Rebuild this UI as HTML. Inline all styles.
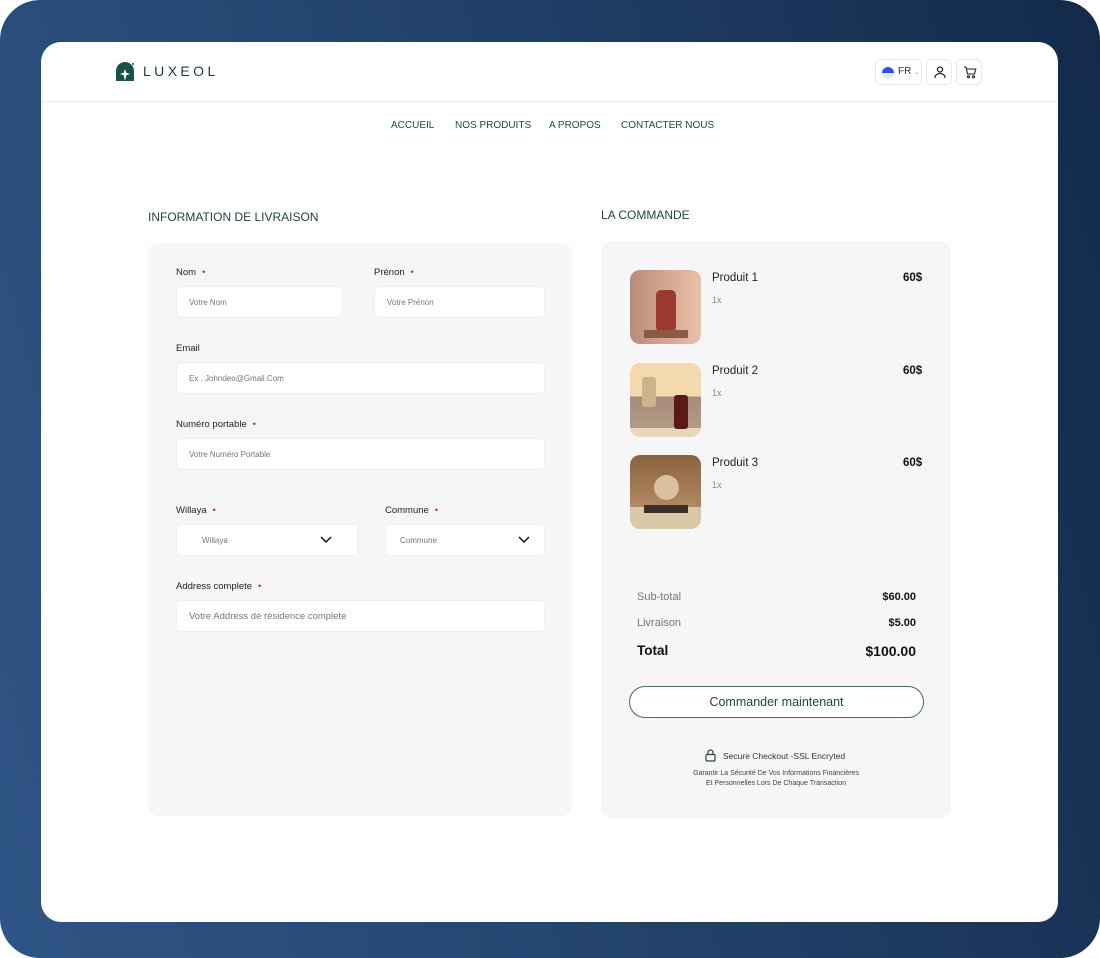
<!DOCTYPE html>
<html><head><meta charset="utf-8"><style>
*{margin:0;padding:0;box-sizing:border-box}
body{width:1100px;height:958px;overflow:hidden;font-family:"Liberation Sans",sans-serif;background:#fff}
.bg{position:absolute;left:0;top:0;width:1100px;height:958px;border-radius:40px;background:linear-gradient(75deg,#2f5586 0%,#22426b 50%,#132a4a 100%)}
.card{position:absolute;left:41px;top:42px;width:1017px;height:880px;background:#fff;border-radius:20px}
.a{position:absolute}
.nav{font-size:10px;color:#1f4a3a;top:120px}
.panel{background:#f6f5f8;border-radius:10px}
.lbl{font-size:9.5px;color:#222}
.lbl i{color:#c0223a;font-style:normal;margin-left:6px;font-size:9px}
.in{background:#fff;border-radius:5px;height:32px;font-size:8px;color:#777;padding-left:12px;line-height:32px;border:1px solid #efeef2}
.img{width:71px;height:74px;border-radius:10px;overflow:hidden}
.pn{font-size:11.5px;color:#222}
.q{font-size:9px;color:#888}
.pr{font-size:11.5px;font-weight:bold;color:#111}
.ib{border:1px solid #e8e8ec;border-radius:5px;height:26px;background:#fff}
</style></head><body>
<div class="bg"></div>
<div class="card"></div>
<svg class="a" style="left:115px;top:62px" width="20" height="20" viewBox="0 0 20 20"><path d="M1 19V9a9 9 0 0 1 18 0v10z" fill="#17524a"/><path d="M10 7l1.3 3.7L15 12l-3.7 1.3L10 19l-1.3-5.7L5 12l3.7-1.3z" fill="#fff"/><circle cx="18" cy="2" r="1" fill="#17524a"/></svg>
<div class="a" style="left:143px;top:63px;font-size:14px;letter-spacing:3.4px;color:#1d3d38">LUXEOL</div>
<div class="ib a" style="left:875px;top:59px;width:47px"><div class="a" style="left:6px;top:7px;width:12px;height:12px;border-radius:50%;background:linear-gradient(#2f4fe6 50%,#e6e8f0 50%)"></div><div class="a" style="left:22px;top:6px;font-size:10px;color:#333">FR <span style="font-size:6px;color:#888">⌄</span></div></div>
<div class="ib a" style="left:926px;top:59px;width:26px"><svg class="a" style="left:6px;top:5px" width="14" height="14" viewBox="0 0 14 14" fill="none" stroke="#222" stroke-width="1.2"><circle cx="7" cy="4.5" r="2.5"/><path d="M2 13c0-3 2.2-4.5 5-4.5s5 1.5 5 4.5"/></svg></div>
<div class="ib a" style="left:956px;top:59px;width:26px"><svg class="a" style="left:6px;top:5px" width="14" height="14" viewBox="0 0 14 14" fill="none" stroke="#222" stroke-width="1.1"><path d="M1 2h2l1.5 7h7l1.3-5H3.6"/><circle cx="5.5" cy="11.8" r="1"/><circle cx="10.5" cy="11.8" r="1"/></svg></div>
<div class="a" style="left:41px;top:101px;width:1017px;height:1px;background:#ececf0"></div>
<div class="a nav" style="left:391px">ACCUEIL</div>
<div class="a nav" style="left:455px">NOS PRODUITS</div>
<div class="a nav" style="left:549px">A PROPOS</div>
<div class="a nav" style="left:621px">CONTACTER NOUS</div>

<div class="a" style="left:148px;top:210px;font-size:12px;color:#1f4a2e">INFORMATION DE LIVRAISON</div>
<div class="a" style="left:601px;top:208px;font-size:12px;color:#1f4a2e">LA COMMANDE</div>

<div class="a panel" style="left:148px;top:243px;width:424px;height:573px"></div>
<div class="a lbl" style="left:176px;top:267px">Nom<i>•</i></div>
<div class="a in" style="left:176px;top:286px;width:167px">Votre Nom</div>
<div class="a lbl" style="left:374px;top:267px">Prénon<i>•</i></div>
<div class="a in" style="left:374px;top:286px;width:171px">Votre Prénon</div>
<div class="a lbl" style="left:176px;top:343px">Email</div>
<div class="a in" style="left:176px;top:362px;width:369px">Ex . Johndeo@Gmail.Com</div>
<div class="a lbl" style="left:176px;top:419px">Numéro portable<i>•</i></div>
<div class="a in" style="left:176px;top:438px;width:369px">Votre Numéro Portable</div>
<div class="a lbl" style="left:176px;top:505px">Willaya<i>•</i></div>
<div class="a in" style="left:176px;top:524px;width:182px;padding-left:25px">Willaya</div>
<div class="a lbl" style="left:385px;top:505px">Commune<i>•</i></div>
<div class="a in" style="left:385px;top:524px;width:160px;padding-left:14px">Commune</div>
<svg class="a" style="left:320px;top:536px" width="12" height="8" viewBox="0 0 12 8"><path d="M1 1l5 5 5-5" stroke="#111" stroke-width="1.5" fill="none"/></svg>
<svg class="a" style="left:518px;top:536px" width="12" height="8" viewBox="0 0 12 8"><path d="M1 1l5 5 5-5" stroke="#111" stroke-width="1.5" fill="none"/></svg>
<div class="a lbl" style="left:176px;top:581px">Address complete<i>•</i></div>
<div class="a in" style="left:176px;top:600px;width:369px;font-size:9.5px">Votre Address de résidence complete</div>

<div class="a panel" style="left:601px;top:241px;width:350px;height:577px"></div>
<div class="a img" style="left:630px;top:270px;background:linear-gradient(90deg,#b88b78,#d9ab94 60%,#e8c0a8)"><div class="a" style="left:26px;top:20px;width:20px;height:42px;border-radius:5px;background:#9c3a30"></div><div class="a" style="left:14px;top:60px;width:44px;height:8px;background:#8a5a45"></div></div>
<div class="a img" style="left:630px;top:363px;background:linear-gradient(#f5d9ae 45%,#a58a78 45%,#b59a88 88%,#e8d6b8 88%)"><div class="a" style="left:12px;top:14px;width:14px;height:30px;border-radius:3px;background:#c9b48e"></div><div class="a" style="left:44px;top:32px;width:14px;height:34px;border-radius:3px;background:#5a1a18"></div></div>
<div class="a img" style="left:630px;top:455px;background:linear-gradient(#8a6440,#b08860 70%,#d8c8a8 70%)"><div class="a" style="left:24px;top:20px;width:25px;height:25px;border-radius:50%;background:#d8c0a0"></div><div class="a" style="left:14px;top:50px;width:44px;height:8px;background:#3a2e28"></div></div>
<div class="a pn" style="left:712px;top:272px">Produit 1</div><div class="a q" style="left:712px;top:295px">1x</div><div class="a pr" style="left:903px;top:272px">60$</div>
<div class="a pn" style="left:712px;top:365px">Produit 2</div><div class="a q" style="left:712px;top:388px">1x</div><div class="a pr" style="left:903px;top:365px">60$</div>
<div class="a pn" style="left:712px;top:457px">Produit 3</div><div class="a q" style="left:712px;top:480px">1x</div><div class="a pr" style="left:903px;top:457px">60$</div>

<div class="a" style="left:637px;top:591px;font-size:11px;color:#777">Sub-total</div>
<div class="a" style="left:877px;top:591px;width:39px;text-align:right;font-size:11px;font-weight:bold;color:#111">$60.00</div>
<div class="a" style="left:637px;top:617px;font-size:11px;color:#777">Livraison</div>
<div class="a" style="left:877px;top:617px;width:39px;text-align:right;font-size:11px;font-weight:bold;color:#111">$5.00</div>
<div class="a" style="left:637px;top:643px;font-size:13.5px;font-weight:bold;color:#111">Total</div>
<div class="a" style="left:846px;top:643px;width:70px;text-align:right;font-size:14px;font-weight:bold;color:#111">$100.00</div>
<div class="a" style="left:629px;top:686px;width:295px;height:32px;border:1px solid #4a6a5a;border-radius:16px;background:#fff;text-align:center;line-height:30px;font-size:12.5px;color:#1f4a2e">Commander maintenant</div>
<svg class="a" style="left:705px;top:749px" width="11" height="13" viewBox="0 0 11 13" fill="none" stroke="#2a4a3a" stroke-width="1.2"><rect x="1" y="5.5" width="9" height="6.5" rx="1"/><path d="M3 5.5V3.5a2.5 2.5 0 0 1 5 0v2"/></svg>
<div class="a" style="left:723px;top:751px;font-size:8.5px;color:#333">Secure Checkout -SSL Encryted</div>
<div class="a" style="left:601px;top:769px;width:350px;text-align:center;font-size:7px;color:#444;line-height:10px">Garantir La Sécurité De Vos Informations Financières<br>Et Personnelles Lors De Chaque Transaction</div>
</body></html>
